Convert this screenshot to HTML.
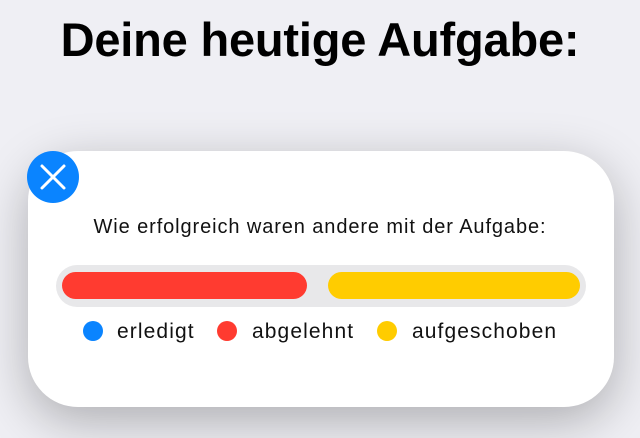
<!DOCTYPE html>
<html><head><style>
body{margin:0;width:640px;height:438px;background:#efeff4;font-family:"Liberation Sans",sans-serif;position:relative;overflow:hidden}
h1{position:absolute;left:0;width:640px;top:12px;margin:0;text-align:center;font-size:47px;font-weight:bold;color:#000;letter-spacing:-0.2px}
.card{position:absolute;left:28px;top:151px;width:586px;height:256px;background:#fff;border-radius:50px;box-shadow:0 14px 50px rgba(0,0,0,0.28)}
.x{position:absolute;left:27px;top:151px;width:52px;height:52px;border-radius:50%;background:#0a84ff}
.sub{position:absolute;left:0;width:640px;top:216px;text-align:center;font-size:20px;letter-spacing:0.9px;color:#111}
.track{position:absolute;left:56px;top:265px;width:530px;height:42px;background:#e8e8ea;border-radius:21px}
.bar{position:absolute;top:272px;height:27px;border-radius:14px}
.leg{position:absolute;top:320px;font-size:21px;letter-spacing:1.1px;color:#111}
.dot{position:absolute;top:321px;width:20px;height:20px;border-radius:50%}
</style></head><body>
<h1>Deine heutige Aufgabe:</h1>
<div class="card"></div>
<div class="x"><svg width="52" height="52"><path d="M15 15L37 37M37 15L15 37" stroke="#fff" stroke-width="3" stroke-linecap="round"/></svg></div>
<div class="sub">Wie erfolgreich waren andere mit der Aufgabe:</div>
<div class="track"></div>
<div class="bar" style="left:62px;width:245px;background:#ff3b30"></div>
<div class="bar" style="left:328px;width:252px;background:#ffcc00"></div>
<div class="dot" style="left:83px;background:#0a84ff"></div><div class="leg" style="left:117px">erledigt</div>
<div class="dot" style="left:217px;background:#ff3b30"></div><div class="leg" style="left:252px">abgelehnt</div>
<div class="dot" style="left:377px;background:#ffcc00"></div><div class="leg" style="left:412px">aufgeschoben</div>
</body></html>
